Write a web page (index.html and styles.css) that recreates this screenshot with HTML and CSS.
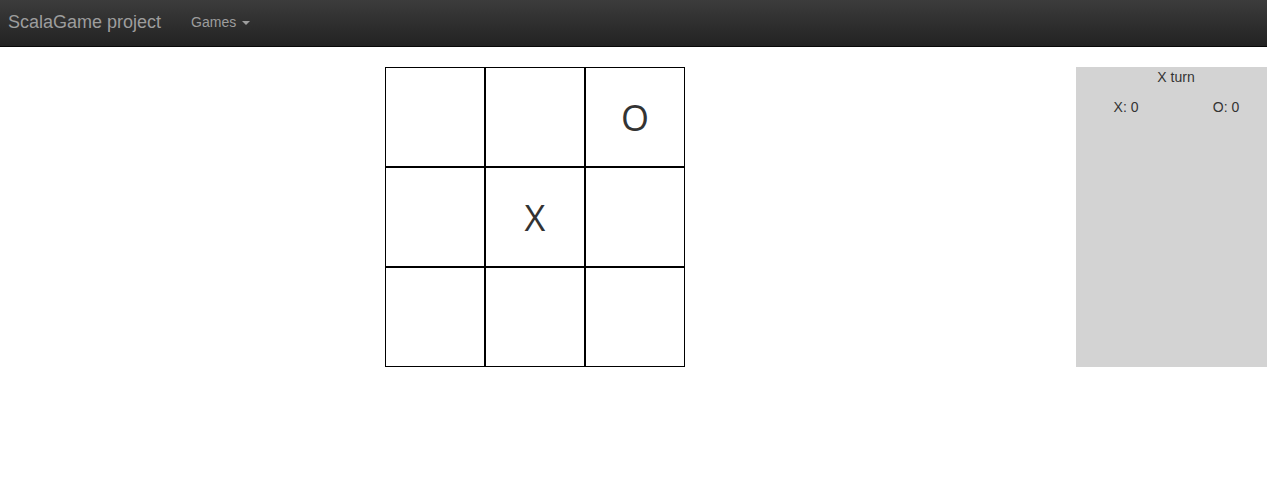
FILE: index.html
```html
<!DOCTYPE html>
<html>
<head>
<meta charset="utf-8">
<link rel="stylesheet" href="styles.css">
</head>
<body>
<nav class="navbar">
  <a class="brand" href="#">ScalaGame project</a>
  <a class="menu" href="#">Games <span class="caret"></span></a>
</nav>
<main class="content">
  <section class="board-area">
    <div class="board">
      <div class="cell"></div>
      <div class="cell"></div>
      <div class="cell">O</div>
      <div class="cell"></div>
      <div class="cell">X</div>
      <div class="cell"></div>
      <div class="cell"></div>
      <div class="cell"></div>
      <div class="cell"></div>
    </div>
  </section>
  <aside class="panel">
    <div class="turn">X turn</div>
    <div class="scores">
      <span class="score">X: 0</span>
      <span class="score">O: 0</span>
    </div>
  </aside>
</main>
</body>
</html>
```
FILE: styles.css
```css
html, body {
  margin: 0;
  padding: 0;
  overflow-x: hidden;
}
body {
  font-family: "Liberation Sans", Arial, sans-serif;
  font-size: 14px;
  color: #333;
  background: #fff;
}
.navbar {
  height: 46px;
  background: linear-gradient(to bottom, #3c3c3c 0%, #222 100%);
  border-bottom: 1px solid #080808;
  display: flex;
  align-items: center;
}
.brand {
  color: #9d9d9d;
  text-decoration: none;
  font-size: 18px;
  padding-left: 8px;
  margin-top: -1px;
}
.menu {
  color: #9d9d9d;
  text-decoration: none;
  font-size: 14px;
  margin-left: 30px;
  margin-top: -3px;
}
.caret {
  display: inline-block;
  width: 0;
  height: 0;
  margin-left: 2px;
  vertical-align: middle;
  border-top: 4px solid #9d9d9d;
  border-left: 4px solid transparent;
  border-right: 4px solid transparent;
}
.content {
  display: flex;
  margin-top: 20px;
}
.board-area {
  width: 1070px;
  flex: none;
  display: flex;
  justify-content: center;
}
.board {
  display: grid;
  grid-template-columns: repeat(3, 100px);
  grid-template-rows: repeat(3, 100px);
}
.cell {
  box-sizing: border-box;
  border: 1px solid #000;
  display: flex;
  align-items: center;
  justify-content: center;
  font-family: "Open Sans", sans-serif;
  font-size: 36px;
  color: #333;
}
.panel {
  flex: none;
  margin-left: 6px;
  width: 200px;
  height: 300px;
  background: #d3d3d3;
  text-align: center;
}
.turn {
  padding-top: 2px;
  line-height: 16px;
}
.scores {
  display: flex;
  margin-top: 14px;
  line-height: 16px;
}
.score {
  flex: 1;
  text-align: center;
}
```
